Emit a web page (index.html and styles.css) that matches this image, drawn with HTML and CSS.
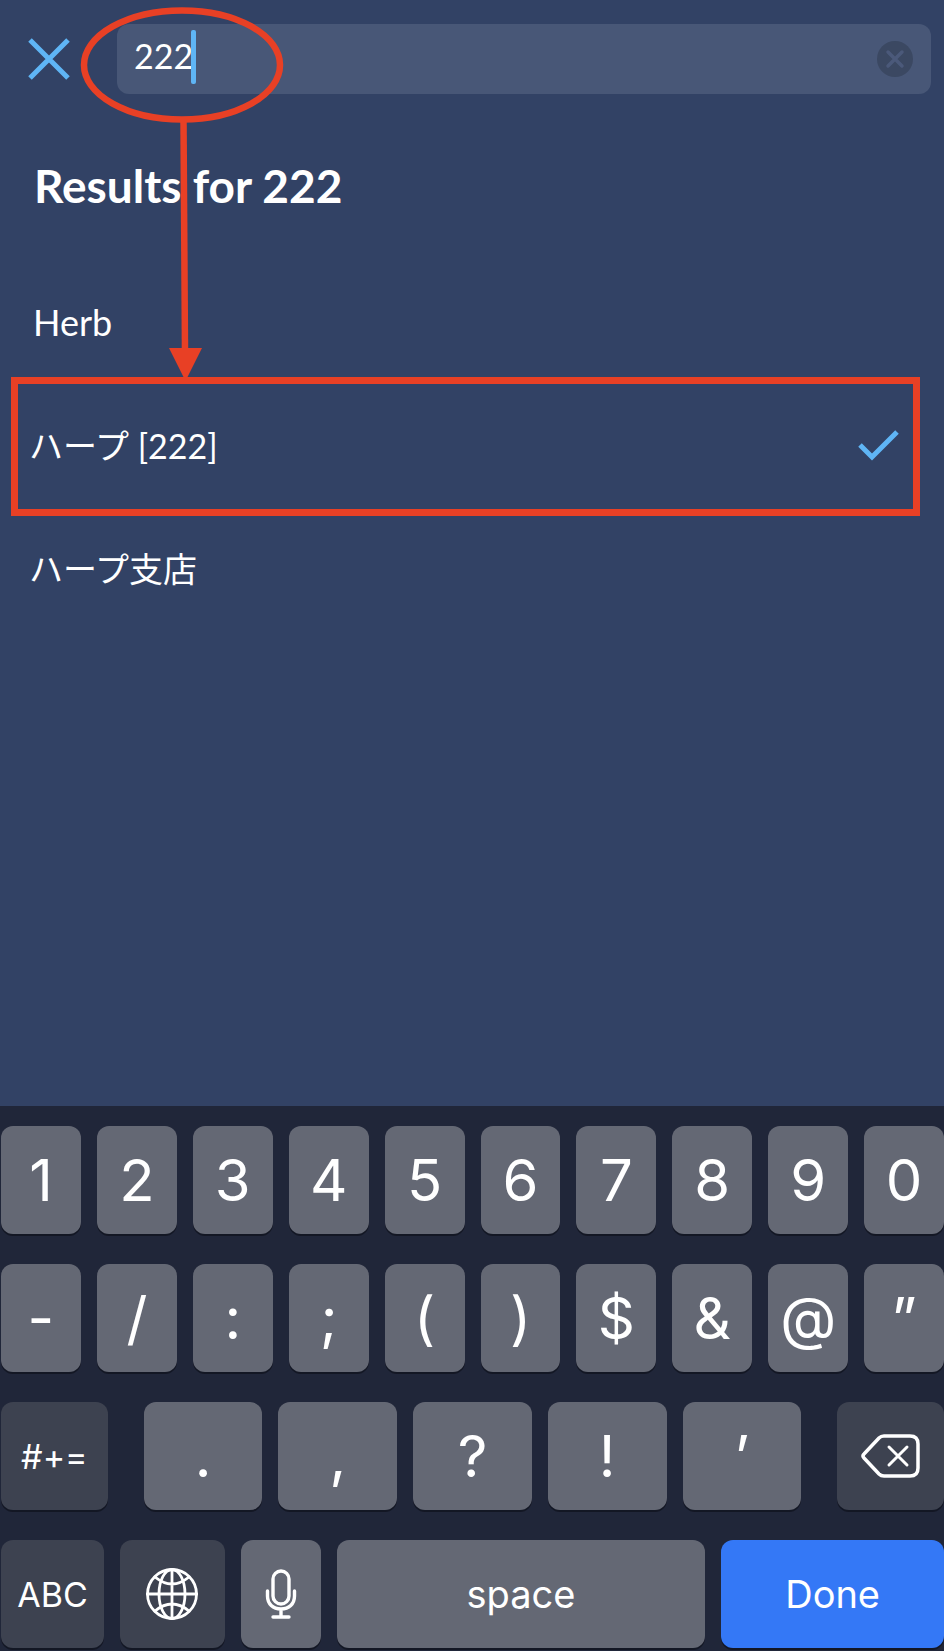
FILE: index.html
```html
<!DOCTYPE html>
<html lang="en">
  <head>
    <meta charset="utf-8">
    <meta name="viewport" content="width=device-width, initial-scale=1">
    <title>Results for 222</title>
    <link rel="stylesheet" href="styles.css">
  </head>
  <body>
    <main>
      <form class="search">
        <button type="button" class="close" aria-label="Close">
          <svg width="42" height="42" viewBox="0 0 42 42"><path d="M2 2L40 40M40 2L2 40" /></svg>
        </button>
        <div class="field">
          <input type="text" value="222" aria-label="Search">
          <span class="caret"></span>
          <button type="button" class="clear" aria-label="Clear">
            <svg width="36" height="36" viewBox="0 0 36 36">
              <circle cx="18" cy="18" r="18" />
              <path d="M11 11L25 25M25 11L11 25" />
            </svg>
          </button>
        </div>
      </form>

      <h1>Results for 222</h1>

      <ul class="results">
        <li>Herb</li>
        <li class="selected" lang="ja">
          ハープ [222]
          <svg class="check" width="42" height="32" viewBox="0 0 42 32"><path d="M2 16L14 28L39 3" /></svg>
        </li>
        <li lang="ja">ハープ支店</li>
      </ul>

      <svg class="arrow" width="300" height="384" viewBox="0 0 300 384">
        <ellipse cx="182" cy="65" rx="98" ry="54.500" />
        <path class="line" d="M183.500 120L185 352" />
        <path class="head" d="M169 348H202L185.500 381Z" />
      </svg>
    </main>

    <div class="keyboard">
      <div class="row">
        <button>1</button>
        <button>2</button>
        <button>3</button>
        <button>4</button>
        <button>5</button>
        <button>6</button>
        <button>7</button>
        <button>8</button>
        <button>9</button>
        <button>0</button>
      </div>
      <div class="row">
        <button>-</button>
        <button>/</button>
        <button>:</button>
        <button>;</button>
        <button>(</button>
        <button>)</button>
        <button>$</button>
        <button>&amp;</button>
        <button>@</button>
        <button>”</button>
      </div>
      <div class="row punctuation">
        <button class="dark">#+=</button>
        <button>.</button>
        <button>,</button>
        <button>?</button>
        <button>!</button>
        <button>’</button>
        <button class="dark" aria-label="Delete">
          <svg width="60" height="44" viewBox="0 0 60 44">
            <path stroke-width="3.500" d="M23 2H49Q57 2 57 10V34Q57 42 49 42H23Q20 42 18 40L3 24Q1 22 3 20L18 4Q20 2 23 2Z" />
            <path stroke-width="3" d="M28 13L46 31M46 13L28 31" />
          </svg>
        </button>
      </div>
      <div class="row bottom">
        <button class="dark abc">ABC</button>
        <button class="dark globe" aria-label="Next keyboard">
          <svg width="52" height="52" viewBox="0 0 52 52" stroke-width="2.800">
            <circle cx="26" cy="26" r="24.500" />
            <ellipse cx="26" cy="26" rx="13" ry="24.500" />
            <path d="M26 1V51M1 26H51M9 9Q26 23 43 9M9 43Q26 29 43 43" />
          </svg>
        </button>
        <button class="mic" aria-label="Dictation">
          <svg width="32" height="50" viewBox="0 0 32 50" stroke-width="3.400">
            <rect x="8" y="2" width="16" height="33" rx="8" />
            <path d="M2.500 22V27C2.500 35 8 40 16 40S29.500 35 29.500 27V22M16 40V48M8 48H24" />
          </svg>
        </button>
        <button class="space">space</button>
        <button class="done">Done</button>
      </div>
    </div>
  </body>
</html>
```
FILE: styles.css
```css
* {
  box-sizing: border-box;
}
body {
  display: flex;
  flex-direction: column;
  min-height: 100vh;
  margin: 0;
  overflow-x: hidden;
  background-color: #324265;
  color: #fff;
  font-family: Lato, "Noto Sans CJK JP", sans-serif;
}
button {
  border: none;
  padding: 0;
  background: none;
  color: inherit;
  font-family: inherit;
}
svg {
  display: block;
  fill: none;
}
main {
  position: relative;
  flex: 1;
}

/* search bar */
.search {
  display: flex;
  align-items: center;
  gap: 47px;
  padding: 24px 13px 0 28px;
}
.close svg,
.check {
  stroke: #5fb5f5;
  stroke-width: 5;
}
.field {
  position: relative;
  display: flex;
  flex: 1;
  align-items: center;
  height: 70px;
  padding: 0 18px 0 17px;
  border-radius: 12px;
  background-color: #485777;
}
.field input {
  flex: 1;
  min-width: 0;
  height: 70px;
  padding: 0 0 8px;
  border: none;
  outline: none;
  background: none;
  color: inherit;
  font-family: inherit;
  font-size: 34px;
}
.caret {
  position: absolute;
  top: 6px;
  left: 74px;
  width: 5px;
  height: 54px;
  border-radius: 2px;
  background-color: #5fb5f5;
}
.clear circle {
  fill: #3b4862;
}
.clear path {
  stroke: #4b597a;
  stroke-width: 3.5;
  stroke-linecap: round;
}

/* results */
h1 {
  margin: 62px 34px 0;
  font-size: 46px;
  line-height: 60px;
}
.results {
  margin: 44px 0 0;
  padding: 0;
  list-style: none;
  font-size: 36px;
}
.results li {
  position: relative;
  display: flex;
  align-items: center;
  justify-content: space-between;
  height: 123px;
  padding: 0 44px 0 33px;
}
.results li:lang(ja) {
  padding-left: 29px;
  font-size: 34px;
}

/* red marks */
.selected::after {
  content: "";
  position: absolute;
  inset: -6px 24px -10px 11px;
  border: 7px solid #e84025;
}
.arrow {
  position: absolute;
  top: 0;
  left: 0;
  pointer-events: none;
}
.arrow ellipse,
.arrow .line {
  stroke: #e84025;
  stroke-width: 6.5;
}
.arrow .head {
  fill: #e84025;
}

/* keyboard */
.keyboard {
  display: flex;
  flex-direction: column;
  gap: 30px;
  padding: 20px 0 3px 1px;
  background-color: #202639;
  font-family: Inter, sans-serif;
}
.row {
  display: flex;
  gap: 16px;
}
.row button {
  display: flex;
  flex: 80 0 0;
  align-items: center;
  justify-content: center;
  min-width: 0;
  height: 108px;
  border-radius: 12px;
  background-color: #646874;
  box-shadow: 0 2px 0 #131724;
  font-size: 58px;
}
.row svg {
  stroke: #fff;
  stroke-linecap: round;
}
.row .dark {
  background-color: #3d4250;
  font-size: 34px;
}
.punctuation button {
  flex-grow: 119;
}
.punctuation .dark {
  flex-grow: 107;
}
.punctuation .dark:first-child {
  margin-right: 20px;
}
.punctuation .dark:last-child {
  margin-left: 20px;
}
.bottom .abc {
  flex-grow: 103;
}
.bottom .globe {
  flex-grow: 105;
}
.bottom .space {
  flex-grow: 369;
  font-size: 38px;
}
.bottom .done {
  flex-grow: 223;
  background-color: #3478f6;
  font-size: 38px;
}
```
